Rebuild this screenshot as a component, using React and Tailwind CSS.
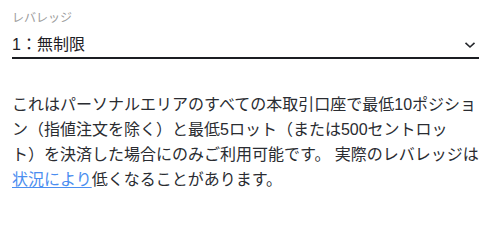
const font = { fontFamily: '"Liberation Sans", "Noto Sans CJK JP", sans-serif' }

const LeverageSelect = () => {
  return (
    <div className="w-[467px]">
      <label className="block text-xs leading-4 text-[#9b9b9b]">レバレッジ</label>
      <div className="mt-[7px] flex h-6 items-center justify-between border-b-2 border-[#1b1d22] box-content">
        <span className="text-base leading-6 text-[#1e2025]">1：無制限</span>
        <svg width="12" height="8" viewBox="0 0 12 8" className="mr-[3px] text-[#25272c]">
          <path d="M1.5 1.8 L6 6 L10.5 1.8" fill="none" stroke="currentColor" strokeWidth="1.6" />
        </svg>
      </div>
    </div>
  )
}

export default function App() {
  return (
    <div className="min-h-[201px] bg-white pl-3 pt-[10px]" style={font}>
      <LeverageSelect />
      <p className="mt-[33px] w-[486px] whitespace-nowrap text-base leading-[25px] text-[#2a2c31] [text-spacing-trim:space-all]">
        これはパーソナルエリアのすべての本取引口座で最低10ポジショ
        <br />
        ン（指値注文を除く）と最低5ロット（または500セントロッ
        <br />
        ト）を決済した場合にのみご利用可能です。 実際のレバレッジは
        <br />
        <a href="#" className="text-[#4b8ef0] underline underline-offset-2">状況により</a>
        低くなることがあります。
      </p>
    </div>
  )
}
